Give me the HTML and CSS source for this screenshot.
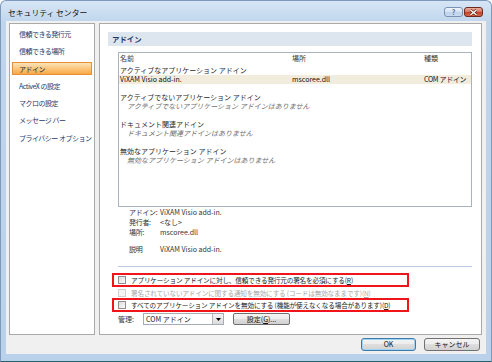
FILE: index.html
```html
<!DOCTYPE html>
<html lang="ja">

<head>
  <meta charset="UTF-8">
  <title>セキュリティ センター</title>
  <link rel="stylesheet" href="styles.css">
</head>

<body>
  <div class="window">
    <div class="titlebar">
      <span class="title">セキュリティ センター</span>
      <div class="caption-buttons">
        <span class="cap-btn help">?</span>
        <span class="cap-btn close">
          <svg width="9" height="7" viewBox="0 0 9 7">
            <path d="M1.5 1 L7.5 6 M7.5 1 L1.5 6" stroke="#5a1a10" stroke-width="2.6" />
            <path d="M1.5 1 L7.5 6 M7.5 1 L1.5 6" stroke="#fff" stroke-width="1.4" />
          </svg>
        </span>
      </div>
    </div>

    <div class="client">
      <div class="panes">
        <ul class="nav">
          <li>信頼できる発行元</li>
          <li>信頼できる場所</li>
          <li class="active">アドイン</li>
          <li>ActiveX の設定</li>
          <li>マクロの設定</li>
          <li>メッセージ バー</li>
          <li>プライバシー オプション</li>
        </ul>

        <div class="content">
          <div class="section-title">アドイン</div>

          <div class="addin-list">
            <div class="row list-head">
              <span>名前</span><span>場所</span><span>種類</span>
            </div>
            <div class="group">アクティブなアプリケーション アドイン</div>
            <div class="row selected">
              <span>ViXAM Visio add-in.</span><span>mscoree.dll</span><span>COM アドイン</span>
            </div>
            <div class="spacer"></div>
            <div class="group">アクティブでないアプリケーション アドイン</div>
            <div class="empty">アクティブでないアプリケーション アドインはありません</div>
            <div class="spacer"></div>
            <div class="group">ドキュメント関連アドイン</div>
            <div class="empty">ドキュメント関連アドインはありません</div>
            <div class="spacer"></div>
            <div class="group">無効なアプリケーション アドイン</div>
            <div class="empty">無効なアプリケーション アドインはありません</div>
          </div>

          <dl class="details">
            <dt>アドイン:</dt><dd>ViXAM Visio add-in.</dd>
            <dt>発行者:</dt><dd>&lt;なし&gt;</dd>
            <dt>場所:</dt><dd>mscoree.dll</dd>
            <dt class="gap">説明</dt><dd class="gap">ViXAM Visio add-in.</dd>
          </dl>

          <div class="sep"></div>

          <div class="options">
            <label class="option marked"><span class="check"></span>アプリケーション アドインに対し、信頼できる発行元の署名を必須にする(<u>R</u>)</label>
            <label class="option disabled"><span class="check"></span>署名されていないアドインに関する通知を無効にする (コードは無効なままです)(<u>N</u>)</label>
            <label class="option marked"><span class="check"></span>すべてのアプリケーション アドインを無効にする (機能が使えなくなる場合があります)(<u>D</u>)</label>
          </div>

          <div class="manage">
            <span class="manage-label">管理:</span>
            <div class="combo">
              <span class="combo-text">COM アドイン</span>
              <span class="combo-arrow">
                <svg width="5" height="3" viewBox="0 0 5 3"><path d="M0 0 H5 L2.5 3 Z" fill="#000" /></svg>
              </span>
            </div>
            <button class="btn settings">設定(<u>G</u>)...</button>
          </div>
        </div>
      </div>

      <div class="dialog-buttons">
        <button class="btn default">OK</button>
        <button class="btn">キャンセル</button>
      </div>
    </div>
  </div>
</body>

</html>
```

FILE: styles.css
```css
* {
  box-sizing: border-box;
}

body {
  margin: 0;
  font-family: "Noto Sans CJK JP", "Noto Sans", sans-serif;
  font-size: 7px;
  color: #222;
}

.window {
  width: 492px;
  height: 362px;
  display: flex;
  flex-direction: column;
  background: linear-gradient(#d7e6f6, #bfd5ec 22px, #b9d1ea);
  border: 1px solid #7e9aba;
  border-bottom-color: #22606c;
  border-radius: 6px 6px 0 0;
}

/* title bar */
.titlebar {
  height: 20px;
  display: flex;
  align-items: center;
  padding: 2px 8px 0 7px;
}

.title {
  font-size: 7.8px;
  color: #111;
}

.caption-buttons {
  margin-left: auto;
  display: flex;
  gap: 1px;
}

.cap-btn {
  width: 19px;
  height: 10px;
  display: flex;
  align-items: center;
  justify-content: center;
  border-radius: 3px;
}

.help {
  background: linear-gradient(#eef4fb, #d2e1f1 50%, #bed3ea 50%, #c9dbee);
  border: 1px solid #7a93b2;
  color: #4f6c90;
  font-size: 7px;
  font-weight: bold;
  line-height: 8px;
}

.close {
  background: linear-gradient(#eab0a0, #d4715a 50%, #c2412a 50%, #d2664a);
  border: 1px solid #6d2a1f;
}

/* client area */
.client {
  flex: 1;
  margin: 0 5px 7px;
  padding: 2px 4px 0 3px;
  background: #f0f0f0;
  display: flex;
  flex-direction: column;
}

.panes {
  height: 312px;
  display: flex;
  gap: 4px;
}

.nav {
  width: 86px;
  margin: 0;
  padding: 3px 2px 0;
  list-style: none;
  background: #fff;
  border: 1px solid #a9a9a9;
}

.nav li {
  height: 13px;
  line-height: 12px;
  margin-bottom: 4.3px;
  padding-left: 6px;
  color: #1d3a6c;
  border: 1px solid transparent;
  white-space: nowrap;
  letter-spacing: -0.5px;
}

.nav li.active {
  color: #1a2a40;
  background: linear-gradient(#fde3b6, #fbca82 45%, #f8a845);
  border-color: #e58f3a;
}

.content {
  flex: 1;
  background: #fff;
  border: 1px solid #a9a9a9;
  padding: 8px 9px 0 8px;
}

.section-title {
  height: 14px;
  line-height: 14px;
  padding-left: 4px;
  background: #dde6ef;
  color: #1d3b66;
  font-weight: bold;
  font-size: 7.4px;
}

/* add-in list */
.addin-list {
  height: 155px;
  margin: 6px 0 0 10px;
  border: 1px solid #a8b3bf;
  background: #fff;
}

.row {
  display: grid;
  grid-template-columns: 172px 132px 1fr;
  padding-left: 1px;
  line-height: 9px;
  white-space: nowrap;
}

.list-head {
  height: 13px;
  line-height: 11px;
  color: #333;
}

.group {
  line-height: 9px;
  padding-left: 1px;
  color: #2a2a2a;
}

.selected {
  background: #f1ecdc;
  color: #111;
}

.selected span:last-child {
  letter-spacing: -0.3px;
}

.spacer {
  height: 9px;
}

.empty {
  line-height: 9px;
  padding-left: 8px;
  font-style: italic;
  color: #6e6e6e;
}

/* details */
.details {
  display: grid;
  grid-template-columns: 31px 1fr;
  margin: 0 0 0 21px;
  line-height: 10px;
  color: #333;
}

.details dt,
.details dd {
  margin: 0;
  white-space: nowrap;
}

.details dt {
  letter-spacing: -0.3px;
}

.details .gap {
  margin-top: 7px;
}

.sep {
  height: 1px;
  margin: 12px 0 0 10px;
  background: #b8cbe2;
}

/* options */
.options {
  width: 297px;
  margin: 6px 0 0 4px;
}

.option {
  display: flex;
  align-items: center;
  height: 14px;
  padding-left: 4px;
  border: 2px solid transparent;
  font-size: 6.6px;
  letter-spacing: -0.15px;
  white-space: nowrap;
  color: #222;
}

.option.marked {
  border-color: #f2141b;
}

.option.disabled {
  height: 11px;
  color: #a8a8a8;
}

.check {
  width: 8px;
  height: 8px;
  margin-right: 5px;
  flex: none;
  border: 1px solid #8f8f8f;
  background: linear-gradient(135deg, #dcdcdc, #fafafa);
}

.disabled .check {
  border-color: #cfcfcf;
  background: #f4f4f4;
}

/* manage row */
.manage {
  display: flex;
  align-items: center;
  margin: 1px 0 0 10px;
  height: 12px;
}

.manage-label {
  width: 25px;
  color: #333;
}

.combo {
  width: 81px;
  height: 12px;
  display: flex;
  border: 1px solid #a5acb5;
  background: #fff;
}

.combo-text {
  flex: 1;
  padding-left: 2px;
  line-height: 10px;
}

.combo-arrow {
  width: 11px;
  display: flex;
  align-items: center;
  justify-content: center;
  background: linear-gradient(#f4f4f4, #dcdcdc);
  border-left: 1px solid #b5b5b5;
}

.btn {
  height: 13px;
  padding: 0;
  font-family: inherit;
  font-size: 7px;
  line-height: 11px;
  color: #111;
  background: linear-gradient(#f4f4f4, #ececec 50%, #dedede 50%, #d2d2d2);
  border: 1px solid #707070;
  border-radius: 3px;
}

.settings {
  width: 57px;
  height: 12px;
  margin-left: 9px;
  border-radius: 2px;
}

/* dialog buttons */
.dialog-buttons {
  display: flex;
  justify-content: flex-end;
  gap: 8px;
  padding: 3px 2px 0 0;
}

.dialog-buttons .btn {
  width: 56px;
}

.dialog-buttons .default {
  width: 55px;
  border-color: #3d7bad;
  box-shadow: inset 0 0 0 1px #9fd3f1;
}
```
